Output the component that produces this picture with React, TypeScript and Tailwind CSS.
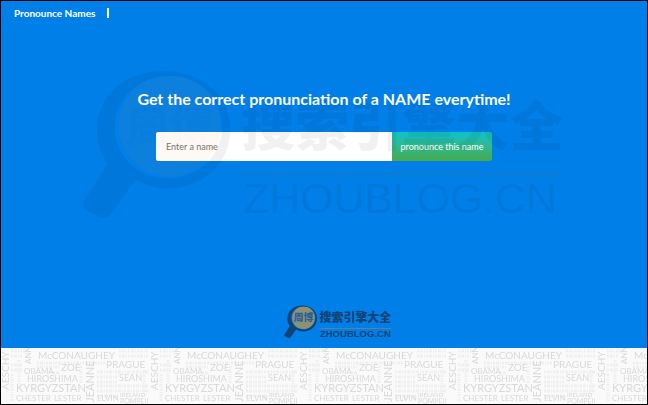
import React, { useState } from 'react';

interface LogoProps {
  className: string;
  variant: 'solid' | 'faint';
}

const logoColors = {
  solid: { ink: '#12416f', rule: '#5b8590', lens: '#96946f', seal: '#2f5f8f', opacity: 0.95 },
  faint: { ink: '#000000', rule: '#a07800', lens: '#ff9c3a', seal: '#a8703a', opacity: 0.05 },
};

const Logo: React.FC<LogoProps> = ({ className, variant }) => {
  const c = logoColors[variant];
  return (
    <svg viewBox="0 0 487 150" className={className} opacity={c.opacity} aria-hidden="true">
      {/* Magnifier */}
      <circle cx="88" cy="57" r="51" fill={c.lens} />
      <path
        d="M83 2C43 2 15 26 15 62c0 13 4 24 11 33L2 133c-2 4 0 7 3 9l13 7c5 2 9 0 12-4l24-34c10 6 20 9 31 9 37 0 64-25 64-60 0-33-28-58-66-58Zm5 5c29 0 53 21 53 50 0 30-24 53-54 53-31 0-54-22-54-52C33 29 57 7 88 7Z"
        fill={c.ink}
        fillRule="evenodd"
      />
      <text x="88" y="74" fontSize="44" fontWeight="900" textAnchor="middle" fill={c.seal} fontFamily="'Noto Sans CJK SC', sans-serif">
        周博
      </text>
      {/* Name */}
      <text x="160" y="77" fontSize="54" fontWeight="900" fill={c.ink} fontFamily="'Noto Sans CJK SC', sans-serif">
        搜索引擎大全
      </text>
      <path d="M160 106H482" stroke={c.rule} strokeWidth="5" />
      <text
        x="162"
        y="145"
        fontSize="43"
        fontWeight={variant === 'solid' ? 700 : 400}
        fill={c.ink}
        fontFamily="'Liberation Sans', sans-serif"
      >
        ZHOUBLOG.CN
      </text>
    </svg>
  );
};

interface CloudWord {
  text: string;
  x: number;
  y: number;
  size: number;
  vertical?: boolean;
}

const cloudWords: CloudWord[] = [
  { text: 'AESCHY', x: 8, y: 42, size: 10, vertical: true },
  { text: 'McCONAUGHEY', x: 37, y: 11, size: 10 },
  { text: 'PRAGUE', x: 105, y: 20, size: 10 },
  { text: 'OBAMA', x: 23, y: 26, size: 8 },
  { text: 'ZOE', x: 60, y: 23, size: 10 },
  { text: 'HIROSHIMA', x: 26, y: 34, size: 9 },
  { text: 'KYRGYZSTAN', x: 15, y: 44, size: 11 },
  { text: 'CHESTER', x: 15, y: 53, size: 8 },
  { text: 'LESTER', x: 53, y: 53, size: 8 },
  { text: 'JEANNE', x: 93, y: 54, size: 11, vertical: true },
  { text: 'ELVIN', x: 96, y: 53, size: 8 },
  { text: 'SEAN', x: 118, y: 33, size: 9 },
  { text: 'IRELAND', x: 119, y: 49, size: 6 },
  { text: 'POMPEII', x: 119, y: 56, size: 7 },
  { text: 'ANN', x: 30, y: 16, size: 8, vertical: true },
];

const NameCloud: React.FC = () => (
  <svg className="block h-14 w-full" aria-hidden="true">
    <defs>
      <pattern id="names" width="149" height="56" patternUnits="userSpaceOnUse">
        {/* Rows of names too small to read */}
        <g stroke="#efefef" strokeWidth="3">
          <path
            strokeDasharray="2 1 3 1 1 1"
            d="M10 3H24M10 8H22M118 3H148M118 8H148M36 15H104M36 19H58M96 24H148M96 29H116M96 34H116M96 38H148M96 43H148M96 48H116M10 17H22M10 22H22M52 25H58"
          />
          <path strokeDasharray="2 1 1 1" d="M11 26V54M18 12V36M80 18V36M143 22V48" />
        </g>
        <g fill="#d9d9d9" fontFamily="Lato, sans-serif">
          {cloudWords.map((w) => (
            <text key={w.text} fontSize={w.size} transform={w.vertical ? `translate(${w.x} ${w.y}) rotate(-90)` : `translate(${w.x} ${w.y})`}>
              {w.text}
            </text>
          ))}
        </g>
      </pattern>
    </defs>
    <rect width="100%" height="100%" fill="url(#names)" />
  </svg>
);

const App: React.FC = () => {
  const [name, setName] = useState('');

  return (
    <div className="relative flex min-h-screen flex-col overflow-hidden border border-black bg-[#007fe8] font-[Lato,sans-serif] text-white">
      {/* Header */}
      <header className="flex items-center gap-3 px-[13px] pt-1">
        <a href="/" className="text-[10px] leading-4 font-bold">
          Pronounce Names
        </a>
        <span className="h-2.5 w-0.5 bg-white" />
      </header>

      {/* Search */}
      <main className="flex flex-1 flex-col items-center px-4 pt-[66px]">
        <h1 className="text-center text-[16px] leading-6 font-bold">Get the correct pronunciation of a NAME everytime!</h1>
        <form className="mt-[21px] flex w-full max-w-84" onSubmit={(e) => e.preventDefault()}>
          <input
            type="text"
            aria-label="Enter a name"
            placeholder="Enter a name"
            value={name}
            onChange={(e) => setName(e.target.value)}
            className="h-[29px] min-w-0 flex-1 rounded-l-xs bg-white px-2.5 text-[9px] text-gray-800 outline-none placeholder:text-[#707070]"
          />
          <button type="submit" className="h-[29px] w-25 rounded-r-xs bg-linear-to-b from-[#06c3ca] to-[#44ab48] text-[9px]">
            pronounce this name
          </button>
        </form>
        <Logo variant="solid" className="mt-auto mb-2.5 ml-7 w-27" />
      </main>

      <footer className="bg-[#fafafa]">
        <NameCloud />
      </footer>

      {/* Watermark */}
      <div className="pointer-events-none absolute inset-x-0 top-17 flex justify-center">
        <Logo variant="faint" className="w-3/4" />
      </div>
    </div>
  );
};

export default App;
